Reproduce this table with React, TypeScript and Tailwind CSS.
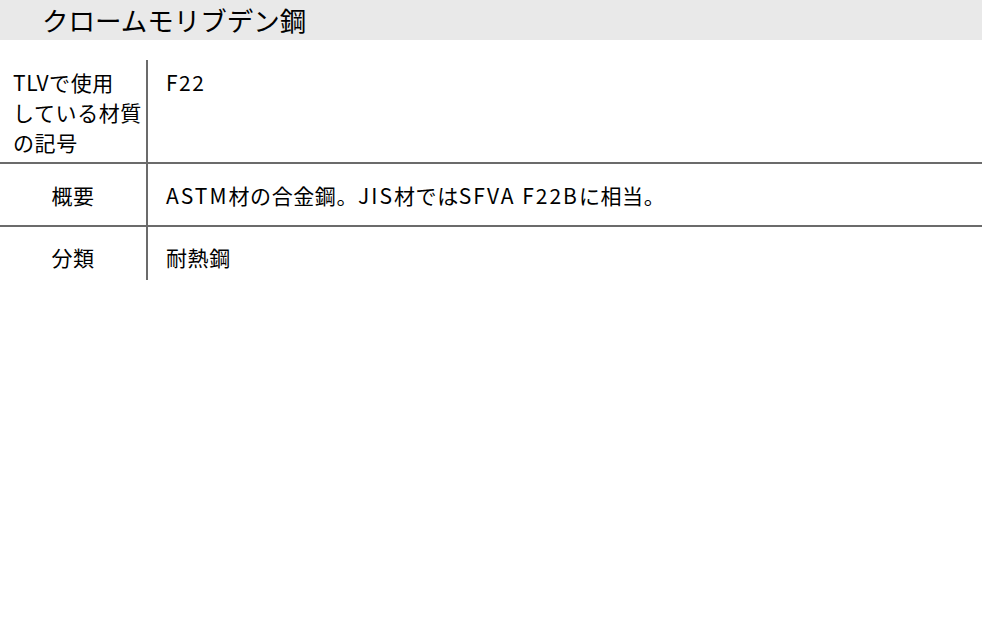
export default function App() {
  const font = {
    fontFamily: '"Noto Sans CJK JP", "Noto Sans", sans-serif',
  };

  return (
    <div className="min-h-[640px] w-full bg-white text-black" style={font}>
      <div className="flex h-[40px] items-center bg-[#e9e9e9] pl-[42px] text-[26.5px] leading-[40px]">
        クロームモリブデン鋼
      </div>

      <div className="mt-[20px] text-[21px] tracking-[0.6px]">
        <div className="flex border-b-2 border-[#6b6b6b]">
          <div className="w-[148px] shrink-0 whitespace-nowrap border-r-2 border-[#6b6b6b] pt-[7px] pb-[5px] pl-[13px] leading-[30px]">
            TLVで使用
            <br />
            している材質
            <br />
            の記号
          </div>
          <div className="pt-[7px] pl-[18px] leading-[30px] tracking-[1.5px]">F22</div>
        </div>

        <div className="flex h-[63px] border-b-2 border-[#6b6b6b]">
          <div className="flex w-[148px] shrink-0 items-center justify-center border-r-2 border-[#6b6b6b] leading-[30px]">
            概要
          </div>
          <div className="flex items-center whitespace-nowrap pl-[18px] leading-[30px]">
            <span className="tracking-[2px]">ASTM</span>
            材の合金鋼。
            <span className="tracking-[2px]">JIS</span>
            材では
            <span className="tracking-[2px]">SFVA F22B</span>
            に相当。
          </div>
        </div>

        <div className="flex h-[53px]">
          <div className="w-[148px] shrink-0 border-r-2 border-[#6b6b6b] pt-[15px] text-center leading-[30px]">
            分類
          </div>
          <div className="pt-[15px] pl-[18px] leading-[30px]">耐熱鋼</div>
        </div>
      </div>
    </div>
  );
}
